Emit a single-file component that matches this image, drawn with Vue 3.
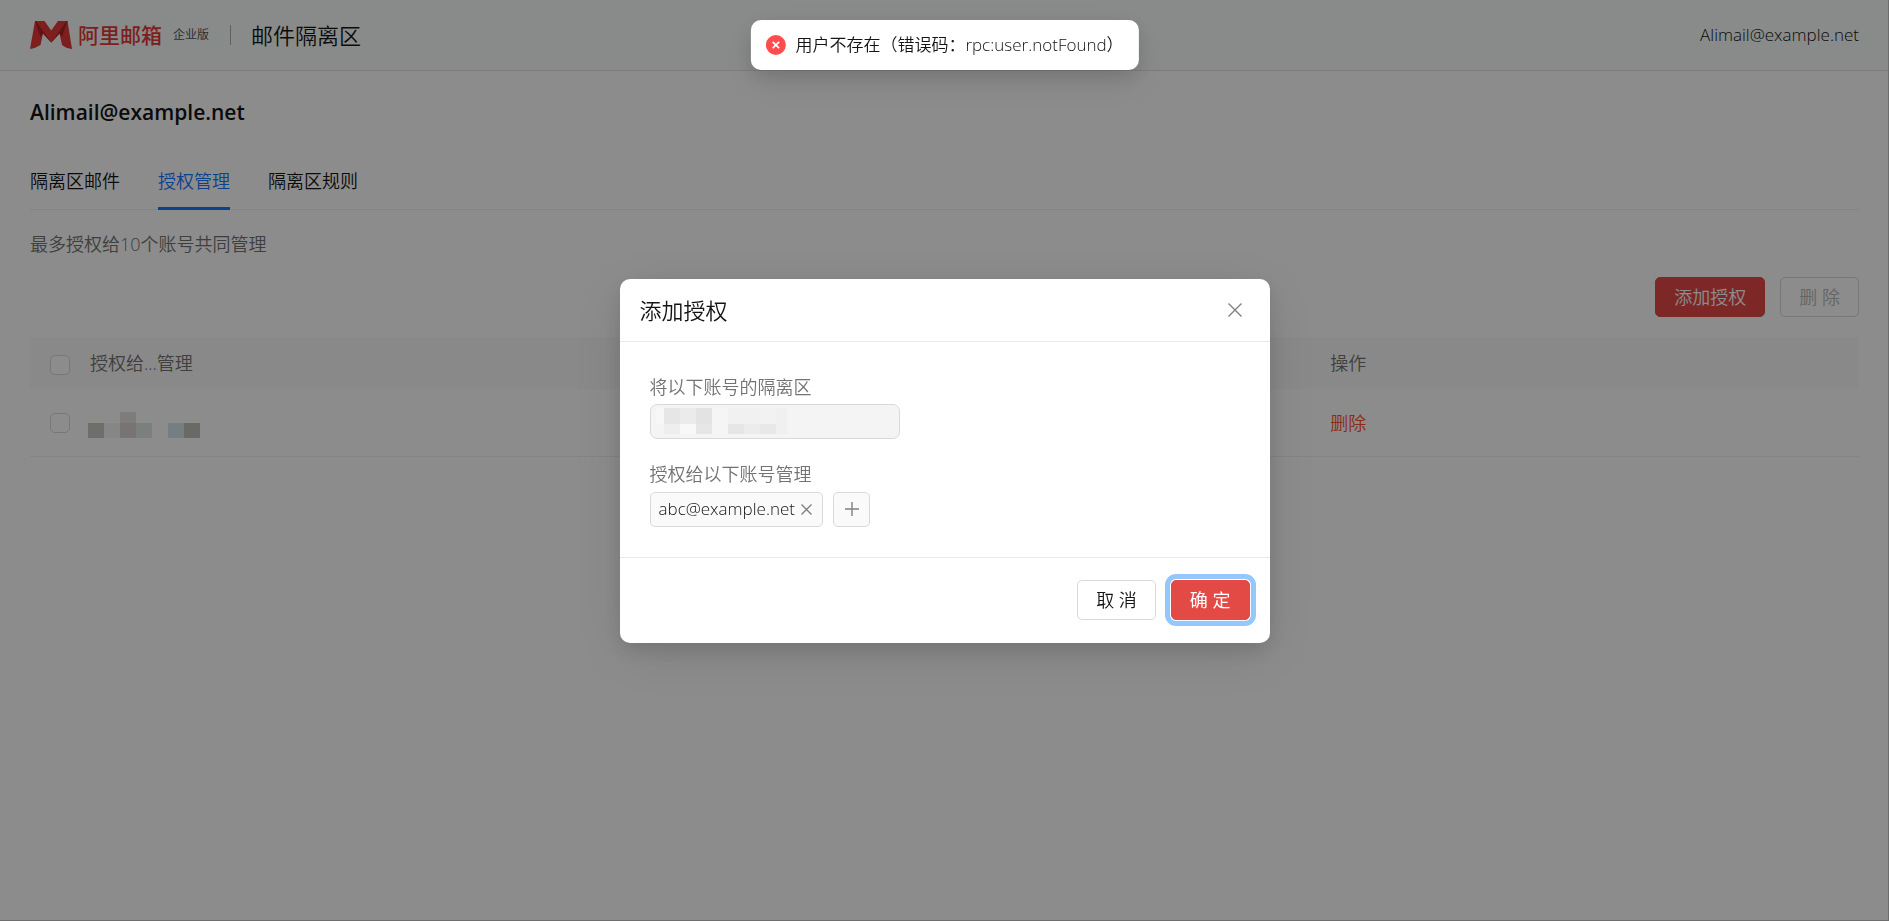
<script setup>
import { ref } from 'vue'

const tabs = ['隔离区邮件', '授权管理', '隔离区规则']
const activeTab = ref('授权管理')
const members = ref(['abc@example.net'])

// Tiles that hide a private account name: x, y, width, height, fill
const rowTiles = [
  [0, 11, 16, 15, '#c8cac3'],
  [16, 11, 16, 15, '#f4f4f4'],
  [32, 0, 16, 11, '#e7e3de'],
  [32, 11, 16, 15, '#dad3d5'],
  [48, 11, 16, 15, '#e1e7e5'],
  [80, 11, 16, 15, '#d5e5eb'],
  [96, 11, 16, 15, '#bdc3b8'],
]
const inputTiles = [
  [0, 0, 8, 16, '#f7f7f7'],
  [8, 0, 16, 16, '#e6e6e6'],
  [24, 0, 16, 16, '#ebebeb'],
  [40, 0, 16, 16, '#e3e3e3'],
  [56, 0, 16, 16, '#f5f5f5'],
  [72, 0, 32, 16, '#f1f1f1'],
  [104, 0, 16, 16, '#f2f2f2'],
  [120, 0, 11, 26, '#f0f0f0'],
  [8, 16, 16, 10, '#eeeeee'],
  [24, 16, 16, 10, '#f8f8f8'],
  [40, 16, 16, 10, '#e6e6e6'],
  [56, 16, 16, 10, '#f5f5f5'],
  [72, 16, 16, 10, '#e6e6e6'],
  [88, 16, 16, 10, '#ececec'],
  [104, 16, 16, 10, '#e8e8e8'],
]
</script>

<template>
  <div class="page">
    <header class="topbar">
      <svg class="logo" viewBox="0 0 42 28" aria-hidden="true">
        <path d="M5 0h9.500l6.700 9.500L28 0h9.500L42 28q-6-.5-10-4L29.500 12.500l-8.200 9.300-8.300-9.300L10.500 24Q6 27 0 28z" fill="#e33a38" />
        <path d="M5 0h1l15.300 21.800L13 12.500 10.500 16z" fill="#b02427" />
        <path d="M37.500 0h-1L21.300 21.800l8.200-9.300L32 16z" fill="#b02427" />
      </svg>
      <span class="brand">阿里邮箱</span>
      <span class="edition">企业版</span>
      <span class="divider"></span>
      <span class="product">邮件隔离区</span>
      <span class="user">Alimail@example.net</span>
    </header>

    <main class="content">
      <h1 class="account">Alimail@example.net</h1>
      <nav class="tabs">
        <button
          v-for="tab in tabs"
          :key="tab"
          type="button"
          class="tab"
          :class="{ active: tab === activeTab }"
          @click="activeTab = tab"
        >{{ tab }}</button>
      </nav>
      <p class="hint">最多授权给10个账号共同管理</p>
      <div class="actions">
        <button type="button" class="btn primary">添加授权</button>
        <button type="button" class="btn" disabled>删 除</button>
      </div>
      <table class="grid">
        <thead>
          <tr>
            <th class="pick"><input type="checkbox" class="check" aria-label="全选" /></th>
            <th class="name">授权给...管理</th>
            <th class="ops">操作</th>
          </tr>
        </thead>
        <tbody>
          <tr>
            <td class="pick"><input type="checkbox" class="check" aria-label="选择" /></td>
            <td>
              <svg class="row-mosaic" viewBox="0 0 112 26" aria-hidden="true">
                <rect v-for="(t, i) in rowTiles" :key="i" :x="t[0]" :y="t[1]" :width="t[2]" :height="t[3]" :fill="t[4]" />
              </svg>
            </td>
            <td class="ops"><a href="#" class="remove">删除</a></td>
          </tr>
        </tbody>
      </table>
    </main>
  </div>

  <div class="mask">
    <section class="modal" role="dialog" aria-modal="true" aria-labelledby="dialog-title">
      <header class="modal-head">
        <h2 id="dialog-title">添加授权</h2>
        <button type="button" class="icon-btn" aria-label="关闭">
          <svg width="14" height="14" viewBox="0 0 14 14"><path d="M.5.5l13 13M13.500.5l-13 13" /></svg>
        </button>
      </header>
      <div class="modal-body">
        <label for="source">将以下账号的隔离区</label>
        <div class="source">
          <input id="source" type="text" disabled />
          <svg class="input-mosaic" viewBox="0 0 131 26" aria-hidden="true">
            <rect v-for="(t, i) in inputTiles" :key="i" :x="t[0]" :y="t[1]" :width="t[2]" :height="t[3]" :fill="t[4]" />
          </svg>
        </div>
        <div id="members-label" class="label">授权给以下账号管理</div>
        <div class="members" role="group" aria-labelledby="members-label">
          <span v-for="m in members" :key="m" class="tag">
            {{ m }}
            <button type="button" class="icon-btn" aria-label="移除">
              <svg width="11" height="11" viewBox="0 0 11 11"><path d="M.5.5l10 10M10.500.5l-10 10" /></svg>
            </button>
          </span>
          <button type="button" class="add" aria-label="添加">
            <svg width="14" height="14" viewBox="0 0 14 14"><path d="M7 0v14M0 7h14" /></svg>
          </button>
        </div>
      </div>
      <footer class="modal-foot">
        <button type="button" class="btn">取 消</button>
        <button type="button" class="btn primary focused">确 定</button>
      </footer>
    </section>
  </div>

  <div class="toast" role="alert">
    <svg width="20" height="20" viewBox="0 0 20 20" aria-hidden="true">
      <circle cx="10" cy="10" r="10" fill="#ff4d4f" />
      <path d="M6.800 6.800l6.400 6.400M13.200 6.800l-6.400 6.400" stroke="#fff" stroke-width="1.700" />
    </svg>
    <span>用户不存在（错误码：rpc:user.notFound）</span>
  </div>
</template>

<style>
body {
  margin: 0;
  background: #fff;
}
</style>

<style scoped>
.page,
.mask,
.toast {
  font-family: "Open Sans", "Noto Sans CJK SC", sans-serif;
  font-size: 18px;
  font-weight: 350;
  line-height: 26px;
  color: #141414;
}
button,
input {
  font: inherit;
  color: inherit;
}
.page {
  min-height: 100vh;
  box-sizing: border-box;
  border-right: 1px solid #c6c6c6;
  border-bottom: 1px solid #c9c9c9;
}
.topbar {
  display: flex;
  align-items: center;
  height: 70px;
  padding: 0 29px 0 30px;
  background: #f8fdfa;
  border-bottom: 1px solid #e5e1e1;
}
.logo {
  width: 42px;
  height: 28px;
}
.brand {
  margin-left: 6px;
  font-size: 21px;
  font-weight: 500;
  color: #e33a38;
}
.edition {
  margin-left: 11px;
  font-size: 12px;
  font-weight: 400;
  color: #555;
}
.divider {
  width: 1px;
  height: 20px;
  margin: 0 20px 0 21px;
  background: #b0b0b0;
}
.product {
  font-size: 22px;
}
.user {
  margin-left: auto;
  font-size: 17px;
}
.content {
  padding: 0 29px 0 30px;
}
.account {
  margin: 0;
  padding: 25px 0 27px;
  font-size: 21px;
  font-weight: 600;
  line-height: 32px;
}
.tabs {
  display: flex;
  gap: 38px;
  height: 54px;
  border-bottom: 1px solid #f0f0f0;
}
.tab {
  height: 55px;
  padding: 0;
  border: 0;
  border-bottom: 3px solid transparent;
  background: none;
}
.tab.active {
  color: #1677ff;
  border-color: #1677ff;
}
.hint {
  margin: 21px 0 20px;
  color: #737373;
}
.actions {
  display: flex;
  justify-content: flex-end;
  gap: 15px;
  margin-bottom: 20px;
}
.btn {
  height: 40px;
  padding: 0 18px;
  border: 1px solid #d9d9d9;
  border-radius: 5px;
  background: #fff;
}
.btn:disabled {
  color: #b8b8b8;
  background: none;
}
.btn.primary {
  color: #fff;
  background: #e34a45;
  border-color: #e34a45;
}
.btn.focused {
  font-weight: 400;
  box-shadow: 0 0 0 1px #fff, 0 0 0 6px #94c7fb;
}
.grid {
  width: 100%;
  table-layout: fixed;
  border-collapse: separate;
  border-spacing: 0;
}
.grid th {
  height: 52px;
  padding: 0;
  background: #fafafa;
  color: #737373;
  font-weight: 350;
  text-align: left;
}
.grid td {
  height: 67px;
  padding: 0;
  border-bottom: 1px solid #f0f0f0;
}
.grid .pick {
  width: 38px;
  padding-left: 20px;
}
.grid .name {
  padding-left: 2px;
}
.grid .ops {
  width: 30%;
  padding-left: 20px;
  box-sizing: border-box;
}
.check {
  display: block;
  appearance: none;
  width: 20px;
  height: 20px;
  margin: 0;
  border: 1px solid #d9d9d9;
  border-radius: 5px;
  background: #fff;
}
.grid th .check {
  margin-top: 3px;
}
.row-mosaic {
  display: block;
  width: 112px;
  height: 26px;
  padding-top: 4px;
}
.remove {
  color: #ff4d1f;
  text-decoration: none;
}
.mask {
  position: fixed;
  inset: 0;
  display: flex;
  align-items: center;
  justify-content: center;
  background: rgba(0, 0, 0, 0.45);
}
.modal {
  width: 650px;
  border-radius: 10px;
  background: #fff;
  box-shadow: 0 8px 20px rgba(0, 0, 0, 0.12), 0 12px 60px rgba(0, 0, 0, 0.1);
}
.modal-head {
  display: flex;
  align-items: center;
  justify-content: space-between;
  height: 62px;
  padding: 0 28px 0 20px;
  border-bottom: 1px solid #e8e8e8;
}
.modal-head h2 {
  margin: 0;
  font-size: 22px;
  font-weight: 350;
}
.icon-btn {
  display: flex;
  padding: 0;
  border: 0;
  background: none;
}
.icon-btn svg,
.add svg {
  fill: none;
  stroke: #808080;
  stroke-width: 1.4;
}
.modal-body {
  padding: 32px 30px 30px;
}
.modal-body label,
.label {
  display: block;
  color: #737373;
  margin-bottom: 4px;
}
.modal-body .label {
  margin-bottom: 5px;
}
.source {
  position: relative;
  width: 250px;
  margin-bottom: 22px;
}
.source input {
  display: block;
  box-sizing: border-box;
  width: 100%;
  height: 35px;
  padding: 0 12px;
  border: 1px solid #d9d9d9;
  border-radius: 7px;
  background: #f4f4f4;
}
.input-mosaic {
  position: absolute;
  left: 6px;
  top: 4px;
  width: 131px;
  height: 26px;
}
.members {
  display: flex;
  gap: 10px;
}
.tag,
.add {
  display: flex;
  align-items: center;
  height: 33px;
  border: 1px solid #d9d9d9;
  border-radius: 5px;
  background: #fafafa;
}
.tag {
  gap: 6px;
  padding: 0 10px 0 8px;
  font-size: 17px;
}
.add {
  justify-content: center;
  box-sizing: border-box;
  width: 37px;
  height: 35px;
  padding: 0;
}
.modal-foot {
  display: flex;
  justify-content: flex-end;
  gap: 15px;
  padding: 22px 20px 23px;
  border-top: 1px solid #e8e8e8;
}
.toast {
  position: fixed;
  top: 20px;
  left: 50%;
  transform: translateX(-50%);
  display: flex;
  align-items: center;
  gap: 10px;
  height: 50px;
  padding: 0 15px;
  border-radius: 10px;
  background: #fff;
  font-size: 17px;
  white-space: nowrap;
  box-shadow: 0 8px 20px rgba(0, 0, 0, 0.12), 0 12px 40px rgba(0, 0, 0, 0.08);
}
.toast svg {
  fill: none;
}
</style>
